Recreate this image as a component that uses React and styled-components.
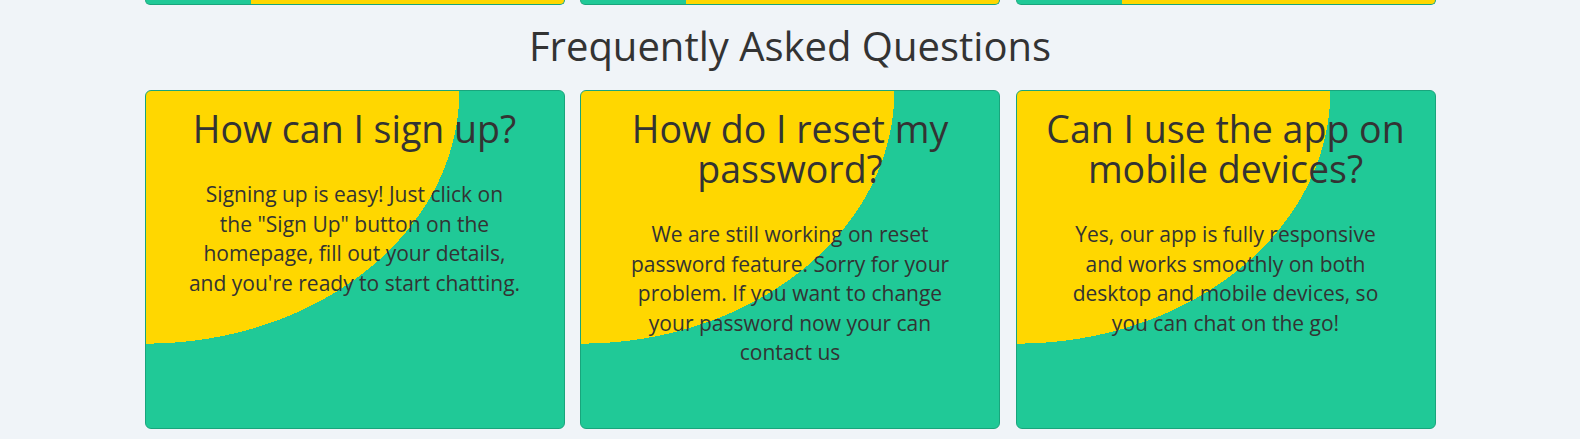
import React from 'react'
import styled, { createGlobalStyle } from 'styled-components'

const GlobalStyle = createGlobalStyle`
  * { box-sizing: border-box; }
  body {
    margin: 0;
    background: #f0f4f8;
    font-family: "Open Sans", "Liberation Sans", sans-serif;
    color: #333;
  }
`

const YELLOW = '#ffd700'
const GREEN = '#20c997'
const EDGE = '#19a57c'

const Page = styled.main`
  width: 100%;
  max-width: 1291px;
  margin: 0 auto;
`

const Row = styled.div`
  display: grid;
  grid-template-columns: repeat(3, 1fr);
  gap: 15.5px;
`

// bottom edge of the feature cards from the section above
const CardTail = styled.div`
  height: 5px;
  border: 1px solid ${EDGE};
  border-top: none;
  border-radius: 0 0 6px 6px;
  background: linear-gradient(to right, ${GREEN} 105px, ${YELLOW} 105px);
`

const Title = styled.h2`
  margin: 18px 0 21px;
  font-size: 40px;
  font-weight: 400;
  line-height: 46px;
  text-align: center;
  color: #333;
`

const Card = styled.article`
  min-height: 339px;
  padding: 18px 20px 20px;
  border: 1px solid ${EDGE};
  border-radius: 6px;
  background: radial-gradient(ellipse at top left, ${YELLOW} 53%, ${GREEN} 53%);
  text-align: center;
`

const Question = styled.h3`
  margin: 0 0 31px;
  font-size: 37.5px;
  font-weight: 400;
  line-height: 40px;
  color: #333;
`

const Answer = styled.p`
  margin: 0 auto;
  max-width: 332px;
  font-size: 21px;
  line-height: 29.6px;
  color: #333;
`

const faqs = [
  {
    q: 'How can I sign up?',
    a: 'Signing up is easy! Just click on the "Sign Up" button on the homepage, fill out your details, and you\'re ready to start chatting.',
  },
  {
    q: 'How do I reset my password?',
    a: 'We are still working on reset password feature. Sorry for your problem. If you want to change your password now your can contact us',
  },
  {
    q: 'Can I use the app on mobile devices?',
    a: 'Yes, our app is fully responsive and works smoothly on both desktop and mobile devices, so you can chat on the go!',
  },
]

const App = () => {
  return (
    <>
      <GlobalStyle />
      <Page>
        <Row>
          <CardTail />
          <CardTail />
          <CardTail />
        </Row>

        <Title>Frequently Asked Questions</Title>

        <Row>
          {faqs.map(item => (
            <Card key={item.q}>
              <Question>{item.q}</Question>
              <Answer>{item.a}</Answer>
            </Card>
          ))}
        </Row>
      </Page>
    </>
  )
}

export default App
